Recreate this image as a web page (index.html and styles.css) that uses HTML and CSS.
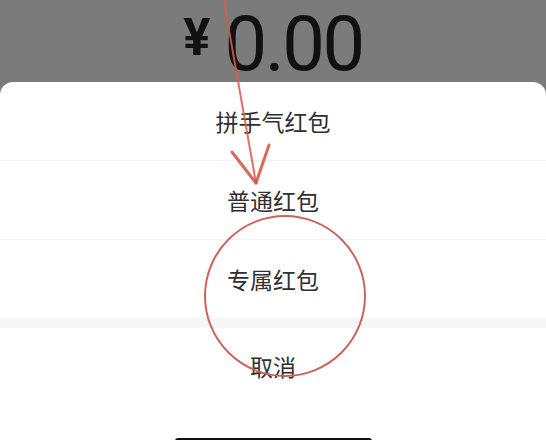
FILE: index.html
```html
<!DOCTYPE html>
<html lang="zh-CN">
<head>
<meta charset="utf-8">
<title>红包类型</title>
<link rel="stylesheet" href="styles.css">
</head>
<body>
<div class="screen">
  <div class="top">
    <div class="amount">
      <span class="yen">¥</span>
      <span class="num">0.00</span>
    </div>
  </div>
  <div class="sheet">
    <div class="option">拼手气红包</div>
    <div class="option">普通红包</div>
    <div class="option last">专属红包</div>
    <div class="gap"></div>
    <div class="option cancel">取消</div>
    <div class="safe"><div class="home-bar"></div></div>
  </div>
  <svg class="annot" width="546" height="440" viewBox="0 0 546 440">
    <line x1="223" y1="-4" x2="256" y2="183" class="shaft"/>
    <line x1="232" y1="152" x2="256" y2="183" class="head"/>
    <line x1="269" y1="145" x2="256" y2="183" class="head"/>
    <circle cx="285" cy="296" r="80" class="ring"/>
  </svg>
</div>
</body>
</html>
```
FILE: styles.css
```css
html, body {
  margin: 0;
  padding: 0;
}
body {
  width: 546px;
  height: 440px;
  overflow: hidden;
  background: #7b7b7b;
  font-family: "Noto Sans CJK SC", "Noto Sans", sans-serif;
}
.screen {
  position: relative;
  width: 546px;
  height: 440px;
  display: flex;
  flex-direction: column;
}
.top {
  height: 82px;
  box-sizing: border-box;
  padding-top: 6px;
  display: flex;
  justify-content: center;
}
.amount {
  display: flex;
  align-items: flex-start;
  gap: 14px;
  color: #111;
  font-family: Roboto, "Liberation Sans", sans-serif;
  line-height: 1;
}
.yen {
  font-size: 51px;
  font-weight: 700;
  margin-top: 6px;
}
.num {
  font-size: 76px;
  letter-spacing: -2.5px;
}
.sheet {
  flex: 1;
  background: #fff;
  border-radius: 13px 13px 0 0;
  display: flex;
  flex-direction: column;
}
.option {
  height: 78px;
  border-bottom: 1px solid #f2f2f2;
  display: flex;
  align-items: center;
  justify-content: center;
  font-size: 23px;
  color: #303030;
}
.option.last {
  border-bottom: none;
}
.gap {
  height: 10px;
  background: #f6f6f6;
}
.option.cancel {
  height: 76px;
  border-bottom: none;
}
.safe {
  flex: 1;
  display: flex;
  justify-content: center;
}
.home-bar {
  margin-top: 34px;
  width: 197px;
  height: 6px;
  border-radius: 3px;
  background: #111;
}
.annot {
  position: absolute;
  left: 0;
  top: 0;
  pointer-events: none;
}
.shaft {
  stroke: #dc5a4e;
  stroke-width: 2;
  stroke-linecap: round;
  opacity: 0.85;
}
.head {
  stroke: #d9584b;
  stroke-width: 3;
  stroke-linecap: round;
  opacity: 0.9;
}
.ring {
  fill: none;
  stroke: #c9665b;
  stroke-width: 2;
}
```
